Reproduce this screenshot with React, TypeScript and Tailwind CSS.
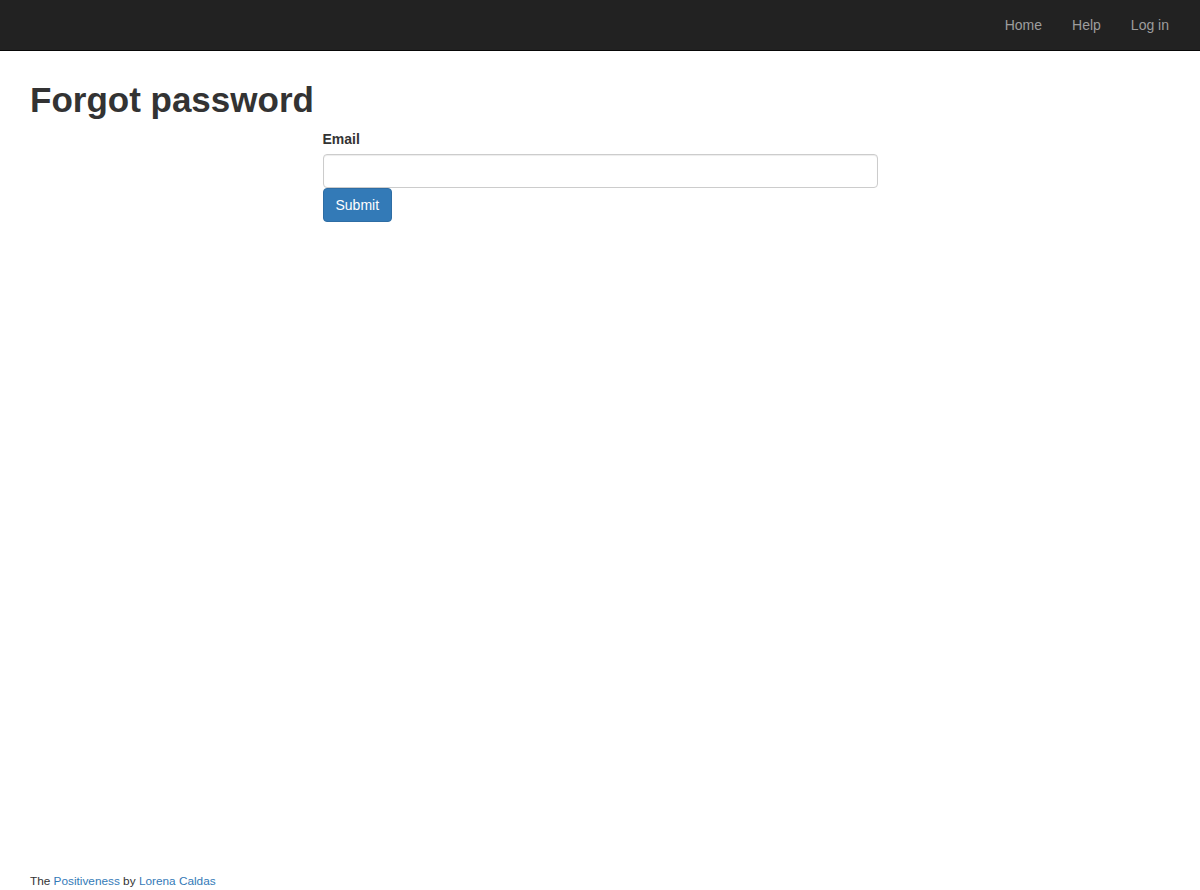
export default function App() {
  return (
    <div className="flex h-[890px] flex-col bg-white font-['Liberation_Sans',Arial,sans-serif] text-[14px] text-[#333]">
      {/* Navbar */}
      <nav className="h-[51px] shrink-0 border-b border-[#080808] bg-[#222]">
        <div className="flex h-[50px] items-center justify-end pr-[16px]">
          <a href="#" className="px-[15px] leading-[20px] text-[#9d9d9d]">Home</a>
          <a href="#" className="px-[15px] leading-[20px] text-[#9d9d9d]">Help</a>
          <a href="#" className="px-[15px] leading-[20px] text-[#9d9d9d]">Log in</a>
        </div>
      </nav>

      {/* Content */}
      <div className="mx-auto w-[1170px] flex-1 px-[15px]">
        <h1 className="mt-[30px] mb-[9px] text-[35px] leading-[1.1] font-bold text-[#333]">Forgot password</h1>
        <div className="flex">
          <div className="ml-[292.5px] w-[555px]">
            <label className="mb-[5px] block leading-[20px] font-bold">Email</label>
            <input
              type="email"
              className="block h-[34px] w-full rounded-[4px] border border-[#ccc] px-[12px] shadow-[inset_0_1px_1px_rgba(0,0,0,0.075)] outline-none"
            />
            <button className="h-[34px] rounded-[4px] border border-[#2e6da4] bg-[#337ab7] px-[12px] leading-[20px] text-white">
              Submit
            </button>
          </div>
        </div>
      </div>

      {/* Footer */}
      <footer className="shrink-0 px-[30px] text-[11.8px] leading-[17px] text-[#333]">
        The <a href="#" className="text-[#337ab7]">Positiveness</a> by{" "}
        <a href="#" className="text-[#337ab7]">Lorena Caldas</a>
      </footer>
    </div>
  );
}
